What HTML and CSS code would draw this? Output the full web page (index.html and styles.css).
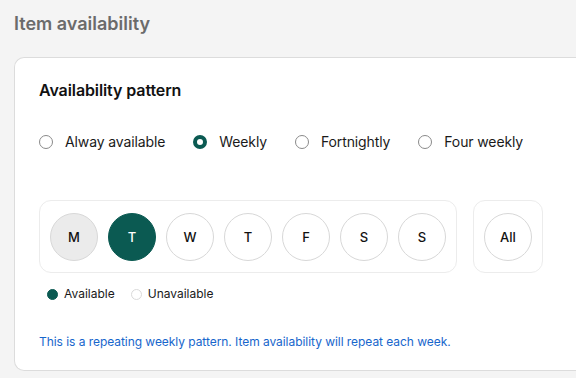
FILE: index.html
```html
<!DOCTYPE html>
<html lang="en">
<head>
    <meta charset="UTF-8">
    <meta name="viewport" content="width=device-width, initial-scale=1.0">
    <title>Item availability</title>
    <link rel="stylesheet" href="styles.css">
</head>
<body>
    <h1 class="page-title">Item availability</h1>

    <div class="card">
        <div class="card-main">
            <h2 class="section-title">Availability pattern</h2>

            <div class="radio-group">
                <label class="radio"><span class="radio-dot"></span>Alway available</label>
                <label class="radio"><span class="radio-dot checked"></span>Weekly</label>
                <label class="radio"><span class="radio-dot"></span>Fortnightly</label>
                <label class="radio"><span class="radio-dot"></span>Four weekly</label>
            </div>

            <div class="days-row">
                <div class="day-box">
                    <button class="day hover">M</button>
                    <button class="day on">T</button>
                    <button class="day">W</button>
                    <button class="day">T</button>
                    <button class="day">F</button>
                    <button class="day">S</button>
                    <button class="day">S</button>
                </div>
                <div class="day-box">
                    <button class="day">All</button>
                </div>
            </div>

            <div class="legend">
                <span class="legend-item"><span class="legend-dot on"></span>Available</span>
                <span class="legend-item"><span class="legend-dot"></span>Unavailable</span>
            </div>

            <p class="note">This is a repeating weekly pattern. Item availability will repeat each week.</p>
        </div>
        <div class="card-divider"></div>
    </div>
</body>
</html>
```

FILE: styles.css
```css
body {
    font-family: Inter, "Noto Sans", sans-serif;
    background-color: #f4f4f4;
    margin: 0;
    padding: 12px 0 0 14px;
    overflow: hidden;
    color: #111;
}

.page-title {
    margin: 0;
    font-size: 18px;
    line-height: 24px;
    font-weight: 600;
    color: #6b6b6b;
}

/* card runs off the right edge, so no right border */
.card {
    margin-top: 21px;
    height: 314px;
    box-sizing: border-box;
    background: white;
    border: 1px solid #dcdcdc;
    border-right: none;
    border-radius: 10px 0 0 10px;
    display: flex;
}

.card-main {
    flex: 1;
    padding: 21px 24px 0 24px;
}

.card-divider {
    width: 2px;
    background: #ececec;
    margin: 15px 11px 16px 0;
}

.section-title {
    margin: 0;
    font-size: 16px;
    line-height: 22px;
    font-weight: 600;
    color: #111;
    letter-spacing: -0.1px;
}

.radio-group {
    display: flex;
    gap: 28px;
    margin-top: 31px;
}

.radio {
    display: flex;
    align-items: center;
    gap: 12px;
    font-size: 14px;
    line-height: 20px;
    color: #1a1a1a;
    letter-spacing: -0.12px;
}

.radio-dot {
    width: 14px;
    height: 14px;
    box-sizing: border-box;
    border: 1px solid #8a8a8a;
    border-radius: 50%;
    background: white;
}

.radio-dot.checked {
    border: 4px solid #0b5a52;
}

.days-row {
    display: flex;
    gap: 16px;
    margin-top: 48px;
}

.day-box {
    display: flex;
    gap: 10px;
    padding: 12px 10px 11px;
    border: 1px solid #ececec;
    border-radius: 12px;
}

.day {
    width: 48px;
    height: 48px;
    border-radius: 50%;
    border: 1px solid #d8d8d8;
    background: white;
    font-family: inherit;
    font-size: 13px;
    font-weight: 500;
    color: #111;
    padding: 0;
}

.day.hover {
    background: #ebebeb;
}

.day.on {
    background: #0b5a52;
    border-color: #0b5a52;
    color: white;
}

.legend {
    display: flex;
    gap: 16px;
    margin-top: 13px;
    padding-left: 8px;
}

.legend-item {
    display: flex;
    align-items: center;
    gap: 6px;
    font-size: 12px;
    line-height: 16px;
    color: #1a1a1a;
}

.legend-dot {
    width: 11px;
    height: 11px;
    box-sizing: border-box;
    border-radius: 50%;
    border: 1px solid #dadada;
    background: white;
}

.legend-dot.on {
    background: #0b5a52;
    border-color: #0b5a52;
}

.note {
    margin: 32px 0 0;
    font-size: 12px;
    line-height: 16px;
    color: #1766cc;
    letter-spacing: -0.05px;
}
```
